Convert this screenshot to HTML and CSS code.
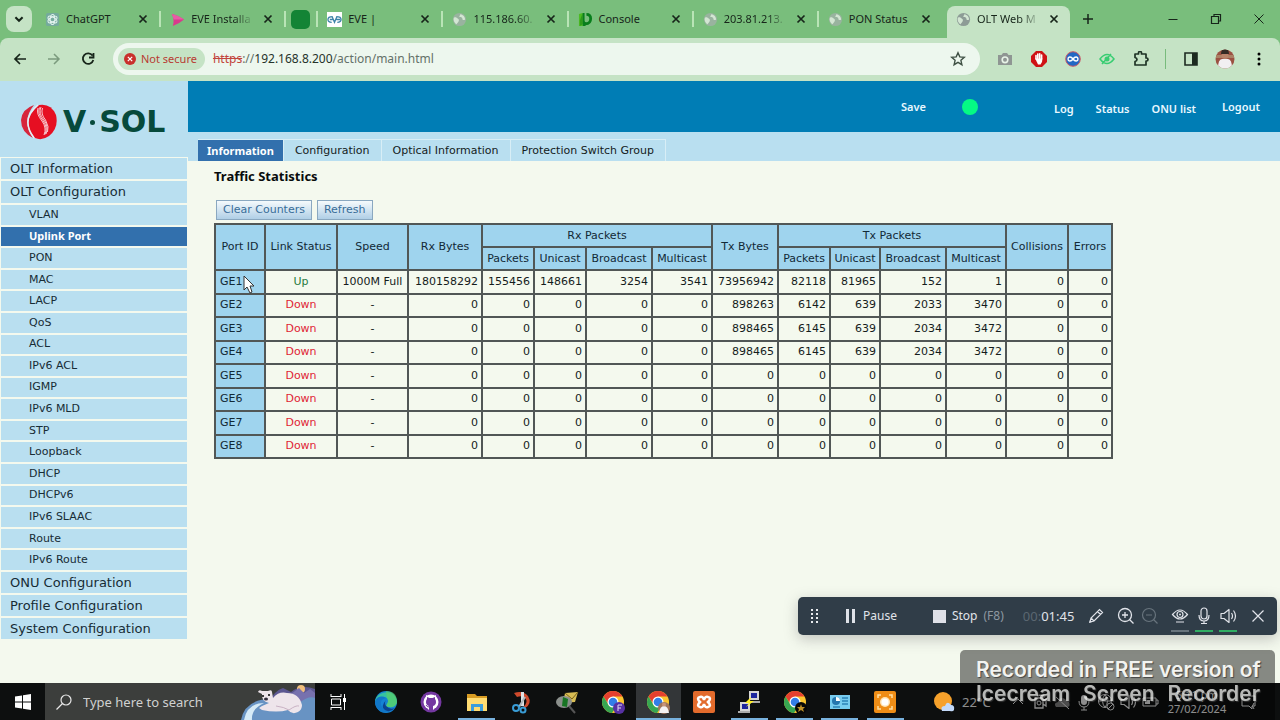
FILE: index.html
```html
<!DOCTYPE html>
<html lang="en">
<head>
<meta charset="utf-8">
<title>OLT Web Management</title>
<link rel="stylesheet" href="styles.css">
</head>
<body>
<svg class="defs" aria-hidden="true">
  <symbol id="x" viewBox="0 0 10 10"><path d="M1.500 1.500l7 7m0-7l-7 7" fill="none" stroke="currentColor" stroke-width="1.700"/></symbol>
  <symbol id="globe" viewBox="0 0 16 16"><circle cx="8" cy="8" r="7" fill="currentColor"/><path d="M2 6c2-1 3 0 4 1s2 1 1 3-2 2-2 3c-2-1-4-4-3-7zM9 2c0 2-2 2-1 3s3 0 3 2 2 2 3 1c0-3-2-5-5-6z" fill="#d3e6d3"/></symbol>
  <symbol id="chrome" viewBox="0 0 24 24"><circle cx="12" cy="12" r="11" fill="#fbc62f"/><path d="M2.500 6.500A11 11 0 0 1 21.500 6.500H12L7.500 14z" fill="#e5402f"/><path d="M2.500 6.500A11 11 0 0 0 11 23l5.500-8.500-4.500 2-4-1z" fill="#37a652"/><circle cx="12" cy="12" r="5.500" fill="#fff"/><circle cx="12" cy="12" r="4.300" fill="#337ee8"/></symbol>
  <symbol id="speaker" viewBox="0 0 18 18"><path d="M2 6.500h3l5-4v13l-5-4H2zM12.500 6q2 3 0 6M14.500 3.500q4 5.500 0 11" fill="none" stroke="currentColor" stroke-width="1.200" stroke-linejoin="round"/></symbol>
</svg>

<header class="browser">
  <div class="tabstrip">
    <button class="tab-search" aria-label="Search tabs"><svg viewBox="0 0 10 10"><path d="M2 3.500l3 3 3-3" fill="none" stroke="currentColor" stroke-width="1.700"/></svg></button>
    <div class="tabs">
      <div class="tab"><svg class="fav" viewBox="0 0 16 16"><rect x="1" y="1" width="14" height="14" rx="2" fill="#74aa9c"/><g fill="none" stroke="#e3f3ef" stroke-width="1.100"><ellipse cx="8" cy="8" rx="2.500" ry="5.300"/><ellipse cx="8" cy="8" rx="2.500" ry="5.300" transform="rotate(60 8 8)"/><ellipse cx="8" cy="8" rx="2.500" ry="5.300" transform="rotate(120 8 8)"/></g></svg><span class="name">ChatGPT</span><button aria-label="Close"><svg><use href="#x"/></svg></button></div>
      <div class="tab"><svg class="fav" viewBox="0 0 16 16"><path d="M2 2q6 1 13 6-6 5-12 7 2-7-1-13z" fill="#d83a8c"/><path d="M2 2q6 1 13 6H4z" fill="#e95ba5"/></svg><span class="name fade">EVE Installa</span><button aria-label="Close"><svg><use href="#x"/></svg></button></div>
      <div class="tab pinned"><span class="square"></span></div>
      <div class="tab"><svg class="fav" viewBox="0 0 16 16"><rect width="16" height="16" fill="#fff"/><path d="M6 5Q1 5 1 8t4 3M3 8h3M5.500 5L8 11l2.500-6M10 5q5 0 5 3t-4 3M10 8h4" fill="none" stroke="#3d83a9" stroke-width="1.400"/></svg><span class="name">EVE |</span><button aria-label="Close"><svg><use href="#x"/></svg></button></div>
      <div class="tab"><svg class="fav pale"><use href="#globe"/></svg><span class="name fade">115.186.60.</span><button aria-label="Close"><svg><use href="#x"/></svg></button></div>
      <div class="tab"><svg class="fav" viewBox="0 0 16 16"><path d="M1 2l4-1v14H1z" fill="#4cbb22"/><path d="M5 1v12l-3 2V9z" fill="#2f9a1c"/><path d="M5 1h2v8q0 2 2 2 3 0 3-4 0-3-3-3V1q6 0 6 6 0 7-7 7v1H5z" fill="#087e1c"/></svg><span class="name">Console</span><button aria-label="Close"><svg><use href="#x"/></svg></button></div>
      <div class="tab"><svg class="fav pale"><use href="#globe"/></svg><span class="name fade">203.81.213.</span><button aria-label="Close"><svg><use href="#x"/></svg></button></div>
      <div class="tab"><svg class="fav pale"><use href="#globe"/></svg><span class="name">PON Status</span><button aria-label="Close"><svg><use href="#x"/></svg></button></div>
      <div class="tab active"><svg class="fav"><use href="#globe"/></svg><span class="name fade">OLT Web M</span><button aria-label="Close"><svg><use href="#x"/></svg></button></div>
    </div>
    <button class="new-tab" aria-label="New tab"><svg viewBox="0 0 12 12"><path d="M6 1v10M1 6h10" stroke="currentColor" stroke-width="1.500"/></svg></button>
    <div class="window-buttons">
      <button aria-label="Minimise"><svg viewBox="0 0 12 12"><path d="M1.500 6.500h9" stroke="currentColor"/></svg></button>
      <button aria-label="Restore"><svg viewBox="0 0 12 12"><path d="M1.500 3.500h7v7h-7zM4 3V1.500h6.500V8H9" fill="none" stroke="currentColor" stroke-width="1.200"/></svg></button>
      <button aria-label="Close window"><svg viewBox="0 0 12 12"><path d="M1.500 1.500l9 9m0-9l-9 9" stroke="currentColor"/></svg></button>
    </div>
  </div>
  <div class="toolbar">
    <div class="nav-buttons">
      <button aria-label="Back"><svg viewBox="0 0 16 16"><path d="M14 8H3M8 3L3 8l5 5" fill="none" stroke="currentColor" stroke-width="1.700"/></svg></button>
      <button class="off" aria-label="Forward"><svg viewBox="0 0 16 16"><path d="M2 8h11M8 3l5 5-5 5" fill="none" stroke="currentColor" stroke-width="1.500"/></svg></button>
      <button aria-label="Reload"><svg viewBox="0 0 16 16"><path d="M12.500 4.500A5.300 5.300 0 1 0 13.300 9M13.500 2v4.500H9" fill="none" stroke="currentColor" stroke-width="1.800"/></svg></button>
    </div>
    <div class="address">
      <span class="insecure"><svg viewBox="0 0 12 12"><circle cx="6" cy="6" r="6" fill="#c9302c"/><path d="M3.800 3.800l4.400 4.400m0-4.400L3.800 8.200" stroke="#fff" stroke-width="1.200"/></svg>Not secure</span>
      <span class="url"><s>https</s>://<b>192.168.8.200</b>/action/main.html</span>
      <button class="star" aria-label="Bookmark"><svg viewBox="0 0 16 16"><path d="M8 1.800l1.800 4.100 4.500.4-3.400 3 1 4.400L8 11.400l-3.900 2.300 1-4.400-3.400-3 4.500-.4z" fill="none" stroke="currentColor" stroke-width="1.400"/></svg></button>
    </div>
    <div class="extensions">
      <svg viewBox="0 0 16 16"><path d="M1 4h3.500L6 2h4l1.500 2H15v10H1z" fill="#8f9693"/><circle cx="8" cy="8.800" r="3.600" fill="#e8f4e8"/><circle cx="8" cy="8.800" r="2" fill="#8f9693"/></svg>
      <svg viewBox="0 0 16 16"><path d="M5 0h6l5 5v6l-5 5H5l-5-5V5z" fill="#cf1215"/><path d="M5 8V4.500M6.800 7.500V3M8.700 7.500V2.700M10.600 8V4" stroke="#fff" stroke-width="1.600" stroke-linecap="round"/><path d="M4.200 7.500h7.200L11 11l-1.500 2.500H7z" fill="#fff"/></svg>
      <svg viewBox="0 0 16 16"><circle cx="8" cy="8" r="7.300" fill="#2368c4" stroke="#cf5964"/><path d="M8 8C6 5 3 5.500 3 8s3 3 5 0 5-2.500 5 0-3 3-5 0z" fill="none" stroke="#fff" stroke-width="1.400"/></svg>
      <svg viewBox="0 0 16 16"><path d="M1 8q7-9 14 0-7 9-14 0zM3 13L12 3" fill="none" stroke="#38cd72" stroke-width="1.500"/><circle cx="8" cy="8" r="2.500" fill="#38cd72"/></svg>
      <svg viewBox="0 0 16 16"><path d="M2 3h3.500V2a1.500 1.500 0 0 1 3 0v1H13v4h.500a1.500 1.500 0 0 1 0 3H13v4H2v-3.500q2-.500 2-2t-2-2z" fill="none" stroke="#1e3325" stroke-width="1.700" stroke-linejoin="round"/></svg>
    </div>
    <div class="profile">
      <svg viewBox="0 0 16 16"><path d="M2 2h12v12H2z" fill="none" stroke="#1c2a20" stroke-width="1.600"/><path d="M9 2h5v12H9z" fill="#1c2a20"/></svg>
      <svg class="avatar" viewBox="0 0 20 20"><clipPath id="av"><circle cx="10" cy="10" r="9.500"/></clipPath><g clip-path="url(#av)"><path fill="#9b5142" d="M0 0h20v20H0z"/><path fill="#ab8165" d="M0 6h20v3H0z"/><path d="M3 20q0-10 4-10h6q4 0 4 10z" fill="#f1eff2"/><circle cx="10" cy="6.500" r="3.500" fill="#b88369"/><path d="M6 5q0-5 4-5t4 5z" fill="#352b25"/></g></svg>
      <svg viewBox="0 0 16 16"><circle cx="8" cy="3" r="1.500"/><circle cx="8" cy="8" r="1.500"/><circle cx="8" cy="13" r="1.500"/></svg>
    </div>
  </div>
</header>

<main class="app">
  <aside class="sidebar">
    <div class="logo">
      <svg viewBox="0 0 36 36"><path d="M13 1Q1 5 0 16q0 12 12 18Q0 17 13 1z" fill="#d7263c"/><path d="M18 1Q30-1 35 11q3 13-7 21-7 5-14 2Q-1 17 18 1z" fill="#e60f22"/><path d="M17 1Q-1 15 13 34" fill="none" stroke="#e6eef5" stroke-width="1.500"/><path d="M17 4q-2 6 4 13 5 7 2 14M20 3q-3 6 3 13 5 7 2 14M18.500 3.500q-2.500 6 3.500 13 5 7 2 14M21.500 4q-2 6 3 12 4 7 2 12" fill="none" stroke="#f8c8cf" stroke-width="1"/></svg>
      <strong>V<i></i>SOL</strong>
    </div>
    <nav class="menu">
      <a href="#">OLT Information</a>
      <a href="#">OLT Configuration</a>
      <div class="submenu">
        <a href="#">VLAN</a><a href="#" class="current">Uplink Port</a><a href="#">PON</a><a href="#">MAC</a><a href="#">LACP</a><a href="#">QoS</a><a href="#">ACL</a><a href="#">IPv6 ACL</a><a href="#">IGMP</a><a href="#">IPv6 MLD</a><a href="#">STP</a><a href="#">Loopback</a><a href="#">DHCP</a><a href="#">DHCPv6</a><a href="#">IPv6 SLAAC</a><a href="#">Route</a><a href="#">IPv6 Route</a>
      </div>
      <a href="#">ONU Configuration</a>
      <a href="#">Profile Configuration</a>
      <a href="#">System Configuration</a>
    </nav>
  </aside>
  <section class="content">
    <div class="banner">
      <a href="#">Save</a><span class="led"></span>
      <nav><a href="#">Log</a><a href="#">Status</a><a href="#">ONU list</a></nav>
      <a href="#">Logout</a>
    </div>
    <nav class="page-tabs"><a href="#" class="current">Information</a><a href="#">Configuration</a><a href="#">Optical Information</a><a href="#">Protection Switch Group</a></nav>
    <div class="panel">
      <h1>Traffic Statistics</h1>
      <div class="actions"><button>Clear Counters</button><button>Refresh</button></div>
      <table>
        <colgroup><col class="w50"><col class="w72"><col class="w71"><col class="w74"><col class="w52"><col class="w52"><col class="w66"><col class="w60"><col class="w66"><col class="w52"><col class="w50"><col class="w66"><col class="w60"><col class="w62"><col class="w44"></colgroup>
        <thead>
          <tr><th rowspan="2">Port ID</th><th rowspan="2">Link Status</th><th rowspan="2">Speed</th><th rowspan="2">Rx Bytes</th><th colspan="4">Rx Packets</th><th rowspan="2">Tx Bytes</th><th colspan="4">Tx Packets</th><th rowspan="2">Collisions</th><th rowspan="2">Errors</th></tr>
          <tr><th>Packets</th><th>Unicast</th><th>Broadcast</th><th>Multicast</th><th>Packets</th><th>Unicast</th><th>Broadcast</th><th>Multicast</th></tr>
        </thead>
        <tbody>
          <tr><th>GE1</th><td class="up">Up</td><td>1000M Full</td><td>180158292</td><td>155456</td><td>148661</td><td>3254</td><td>3541</td><td>73956942</td><td>82118</td><td>81965</td><td>152</td><td>1</td><td>0</td><td>0</td></tr>
          <tr><th>GE2</th><td>Down</td><td>-</td><td>0</td><td>0</td><td>0</td><td>0</td><td>0</td><td>898263</td><td>6142</td><td>639</td><td>2033</td><td>3470</td><td>0</td><td>0</td></tr>
          <tr><th>GE3</th><td>Down</td><td>-</td><td>0</td><td>0</td><td>0</td><td>0</td><td>0</td><td>898465</td><td>6145</td><td>639</td><td>2034</td><td>3472</td><td>0</td><td>0</td></tr>
          <tr><th>GE4</th><td>Down</td><td>-</td><td>0</td><td>0</td><td>0</td><td>0</td><td>0</td><td>898465</td><td>6145</td><td>639</td><td>2034</td><td>3472</td><td>0</td><td>0</td></tr>
          <tr><th>GE5</th><td>Down</td><td>-</td><td>0</td><td>0</td><td>0</td><td>0</td><td>0</td><td>0</td><td>0</td><td>0</td><td>0</td><td>0</td><td>0</td><td>0</td></tr>
          <tr><th>GE6</th><td>Down</td><td>-</td><td>0</td><td>0</td><td>0</td><td>0</td><td>0</td><td>0</td><td>0</td><td>0</td><td>0</td><td>0</td><td>0</td><td>0</td></tr>
          <tr><th>GE7</th><td>Down</td><td>-</td><td>0</td><td>0</td><td>0</td><td>0</td><td>0</td><td>0</td><td>0</td><td>0</td><td>0</td><td>0</td><td>0</td><td>0</td></tr>
          <tr><th>GE8</th><td>Down</td><td>-</td><td>0</td><td>0</td><td>0</td><td>0</td><td>0</td><td>0</td><td>0</td><td>0</td><td>0</td><td>0</td><td>0</td><td>0</td></tr>
        </tbody>
      </table>
    </div>
  </section>
</main>

<footer class="taskbar">
  <button class="start" aria-label="Start"><svg viewBox="0 0 16 16"><path d="M0 2.500l7-1v6H0zM8 1.300L16 0v7.500H8zM0 8.500h7v6l-7-1zM8 8.500h8V16l-8-1.300z" fill="#fff"/></svg></button>
  <label class="search">
    <svg class="lens" viewBox="0 0 16 16"><circle cx="10" cy="6" r="5" fill="none" stroke="#e8e8e8" stroke-width="1.200"/><path d="M6.500 9.500L.500 15.500" stroke="#e8e8e8" stroke-width="1.300"/></svg>
    <input type="text" placeholder="Type here to search" aria-label="Search">
    <svg class="bear" viewBox="0 0 74 36"><path d="M26 20q8-14 16-16l8 4q10-8 24-3v31H26z" fill="#5c5791"/><circle cx="60" cy="5" r="4" fill="#f1bf7c"/><path d="M50 10l8-6 5 5 6-4 5 4v12H50z" fill="#7771ae"/><path d="M0 36Q4 15 30 15l28 4q10-8 16-5v22z" fill="#6893c3"/><path d="M3 36q3-17 20-17-13 6-12 17z" fill="#d5eaf7"/><path d="M17 8q1-3 4-1h6q4-2 4 1l1 6q6-7 14-5 12 0 15 12 0 5-4 7-6 3-10-2-11 3-26 0l-3-2 3-2 7-3q-8-2-7-9z" fill="#eee5eb"/><path d="M35 22q8 1 13 4 7-5 10-4" fill="none" stroke="#c9b2c4"/><circle cx="22" cy="12" r="1"/><circle cx="28" cy="11" r="1"/><ellipse cx="25" cy="15" rx="2" ry="1.500" fill="#322c3b"/></svg>
  </label>
  <button class="start" aria-label="Task view"><svg viewBox="0 0 16 16"><path d="M1 0v3M11 0v3M1 16v-3M11 16v-3M1 2.500h10M1 13.500h10M1.500 5h9v6h-9zM14.500 0v16" fill="none" stroke="#fff"/><path d="M13 4h3v4h-3z" fill="#fff"/></svg></button>
  <div class="apps">
    <button aria-label="Edge"><svg viewBox="0 0 24 24"><circle cx="12" cy="12" r="11" fill="#1583d4"/><path d="M1 12C2 0 22-2 23 12q-1 6-8 5-4 0-2-3 3-5-2-7Q5 6 1 12z" fill="#36c2a0"/><path d="M12 1q11 0 11 11-1 6-8 5-4 0-2-3 2-3 0-6z" fill="#5fd05f" opacity=".6"/><path d="M1 11q4-7 11-3-6 1-5 7 2 6 11 5Q9 26 3 18q-2-3-2-7z" fill="#1177c8"/><path d="M12 10q-2 3 0 6 4 4 9 2-5 5-10 2t1-10z" fill="#0b438f"/></svg></button>
    <button aria-label="GitHub Desktop"><svg viewBox="0 0 24 24"><circle cx="12" cy="12" r="10.500" fill="#7438a1"/><circle cx="12" cy="12" r="7.500" fill="#fff"/><path d="M9.500 20v-4q-4-1-3.500-5 0-2 1-3V5l3 1.500h4L17 5v3q1 1 1 3 .500 4-3.500 5v4z" fill="#fff"/><path d="M10 20v-4q-3-1-3-4 0-2 1-3V7l2.500 1h3L16 7v2q1 1 1 3 0 3-3 4v4z" fill="#7438a1"/><path d="M7 15q1 2 3 2" fill="none" stroke="#7438a1"/></svg></button>
    <button class="open" aria-label="File Explorer"><svg viewBox="0 0 24 24"><path d="M2 4h8l2 2h10v14H2z" fill="#d89c23"/><path d="M2 8h20v13H2z" fill="#ffdc72"/><path d="M6 21v-7h12v7h-3v-4H9v4z" fill="#3b9ddc"/></svg></button>
    <button aria-label="Snipping Tool"><svg viewBox="0 0 24 24"><path d="M4 3q9-3 14 3 5 8-4 13l-1-2q6-5 2-9-3-3-8-1z" fill="#cf4a2c"/><path d="M11 2h3v14h-3z" fill="#dde1e4"/><path d="M15 7l-6 10" stroke="#aeb6bb" stroke-width="2"/><g fill="none" stroke="#399cd5" stroke-width="2"><circle cx="6" cy="18" r="3"/><circle cx="13" cy="20" r="2.500"/></g></svg></button>
    <button aria-label="Mail monitor"><svg viewBox="0 0 24 24"><path d="M10 3l13-1-3 10-12 1z" fill="#d8bd54"/><path d="M10 3l7 6 6-7" fill="none" stroke="#765f1c"/><ellipse cx="9" cy="12" rx="8" ry="6" fill="#8b908c"/><path d="M8 7l5 2-1 8-5-1z" fill="#187524"/><path d="M14 16l6 7" stroke="#555" stroke-width="2"/></svg></button>
    <button aria-label="Chrome F"><svg viewBox="0 0 24 24"><use href="#chrome"/><circle cx="18" cy="18" r="6" fill="#5731a4"/><path d="M17 21v-6h4M17 18h3" fill="none" stroke="#e2d7f5"/></svg></button>
    <button class="open focus" aria-label="Chrome"><svg viewBox="0 0 24 24"><use href="#chrome"/><circle cx="18" cy="18" r="6" fill="#a0755d"/><path d="M13 23q1-7 5-7t5 7z" fill="#f4f2f3"/><circle cx="18" cy="14.500" r="2" fill="#c6947b"/></svg></button>
    <button aria-label="XAMPP"><svg viewBox="0 0 24 24"><rect x="1" y="1" width="22" height="22" rx="2" fill="#e36b2c"/><path d="M8 7q3-1 4 3 1-4 4-3 4 1 0 5 4 4 0 5-3 1-4-3-1 4-4 3-4-1 0-5-4-4 0-5z" fill="none" stroke="#fff" stroke-width="2.500"/></svg></button>
    <button class="open" aria-label="PuTTY"><svg viewBox="0 0 24 24"><path d="M12 1h10v9H12zM3 12h10v9H3z" fill="#d5d5d5"/><path d="M14 3h6v5h-6zM5 14h6v5H5z" fill="#1c259e"/><path d="M13 11h10v2H13zM1 21h12v2H1z" fill="#aaa"/><path d="M14 7l-6 6h4l-3 4 8-6h-4z" fill="#ffef28"/></svg></button>
    <button class="open" aria-label="Chrome A"><svg viewBox="0 0 24 24"><use href="#chrome"/><circle cx="18" cy="18" r="6" fill="#080808"/><path d="M18 14l1 3h3l-2 2 1 3-3-2-3 2 1-3-2-2h3z" fill="#c29228"/></svg></button>
    <button class="open" aria-label="Control panel"><svg viewBox="0 0 24 24"><path d="M2 5h20v14H2z" fill="#77ccef"/><circle cx="8" cy="11" r="4" fill="#2576ae"/><path d="M8 11V7a4 4 0 0 1 4 4z" fill="#fff"/><path d="M14 8h6M14 11h6M14 14h6M5 17h7" stroke="#2c83b8" stroke-width="1.500"/></svg></button>
    <button class="open" aria-label="Icecream Recorder"><svg viewBox="0 0 24 24"><rect x="1" y="1" width="22" height="22" rx="2" fill="#ef8d16"/><circle cx="12" cy="12" r="5" fill="#ffe5b7"/><circle cx="12" cy="12" r="3.500" fill="#fff"/><path d="M5 8V5h3M16 5h3v3M19 16v3h-3M8 19H5v-3" fill="none" stroke="#ffe0a4" stroke-width="1.500"/></svg></button>
  </div>
  <div class="tray">
    <span class="weather"><svg viewBox="0 0 24 24"><circle cx="11" cy="11" r="9" fill="#f6a12b"/><path d="M10 21q-2-5 3-5 2-6 6-1 4 0 3 5-1 2-4 1z" fill="#c3dafa"/></svg>22°C</span>
    <svg viewBox="0 0 18 18"><path d="M4 11l5-5 5 5" fill="none" stroke="currentColor"/></svg>
    <svg viewBox="0 0 18 18"><path d="M4 5h8v10H4zM12 8l3-2v7l-3-2M6 3q4-2 8 1" fill="none" stroke="currentColor" stroke-width="1.300"/><circle cx="8" cy="10" r="2" fill="none" stroke="currentColor"/></svg>
    <svg viewBox="0 0 18 18"><path d="M3 14q-3-4 2-5 2-6 7-3 1 2 4 3 2 5-2 5z" fill="#8a8a8a"/><path d="M3 4l13 12" stroke="currentColor"/></svg>
    <svg viewBox="0 0 18 18"><rect x="6" y="2" width="6" height="10" rx="3" fill="currentColor"/><path d="M4 8q0 6 5 6t5-6M9 14v3M6 17h6" fill="none" stroke="currentColor"/></svg>
    <svg viewBox="0 0 18 18"><circle cx="8" cy="8" r="6.500" fill="none" stroke="currentColor"/><path d="M1.500 8h13M8 1.500q-5 6.500 0 13M8 1.500q5 6.500 0 13" fill="none" stroke="currentColor"/><circle cx="13.500" cy="13.500" r="3.500" fill="#111" stroke="currentColor"/><path d="M11 16l5-5" stroke="currentColor"/></svg>
    <svg><use href="#speaker"/></svg>
    <svg viewBox="0 0 18 18"><path d="M2 5h13v8H2zM15 7h2v4h-2" fill="none" stroke="currentColor"/><path d="M4 7h5v4H4z" fill="currentColor"/></svg>
    <span class="clock">5:11 pm<br>27/02/2024</span>
    <svg viewBox="0 0 18 18"><path d="M2 3h13v10h-3v3l-3-3H2z" fill="none" stroke="currentColor"/><path d="M14 10q-3 3 0 6" fill="none" stroke="currentColor"/></svg>
  </div>
</footer>

<div class="recorder">
  <svg class="grip" viewBox="0 0 8 14"><path d="M0 1h2m3 0h2M0 5h2m3 0h2M0 9h2m3 0h2M0 13h2m3 0h2" stroke="#e7eaed" stroke-width="2"/></svg>
  <button class="pause"><svg viewBox="0 0 12 14"><path d="M1 0h3v14H1zM7 0h3v14H7z" fill="#dfe2e8"/></svg>Pause</button>
  <button class="stop"><span></span>Stop <em>(F8)</em></button>
  <time><em>00:</em>01:45</time>
  <div class="tools">
    <button aria-label="Draw"><svg viewBox="0 0 18 18"><path d="M3 15l1-4 8.500-8.500 3 3L7 14zM10.500 4.500l3 3M4 11l3 3" fill="none" stroke="currentColor" stroke-width="1.200"/><path d="M2 16l1-3 2 2z" fill="currentColor"/></svg></button>
    <button aria-label="Zoom in"><svg viewBox="0 0 18 18"><path d="M12.500 12.500l4 4M5 8h6M8 5v6" stroke="currentColor" stroke-width="1.300"/><circle cx="8" cy="8" r="6.500" fill="none" stroke="currentColor" stroke-width="1.300"/></svg></button>
    <button class="off" aria-label="Zoom out"><svg viewBox="0 0 18 18"><path d="M12.500 12.500l4 4M5 8h6" stroke="currentColor" stroke-width="1.200"/><circle cx="8" cy="8" r="6.500" fill="none" stroke="currentColor" stroke-width="1.200"/></svg></button>
    <button class="idle" aria-label="Webcam"><svg viewBox="0 0 18 18"><path d="M1.500 7.500q7.500-9 15 0-7.500 9-15 0zM5 15h8" fill="none" stroke="currentColor" stroke-width="1.200"/><circle cx="9" cy="7.500" r="3" fill="none" stroke="currentColor" stroke-width="1.200"/><circle cx="9" cy="7.500" r="1" fill="currentColor"/></svg></button>
    <button class="on" aria-label="Microphone"><svg viewBox="0 0 18 18"><rect x="6" y="1" width="6" height="11" rx="3" fill="none" stroke="currentColor" stroke-width="1.200"/><path d="M4 8q0 6 5 6t5-6M9 14v2.500M6 16.500h6" fill="none" stroke="currentColor" stroke-width="1.200"/></svg></button>
    <button class="on" aria-label="System audio"><svg><use href="#speaker"/></svg></button>
    <button aria-label="Close recorder"><svg viewBox="0 0 18 18"><path d="M3.500 3.500l11 11m0-11l-11 11" stroke="currentColor" stroke-width="1.200"/></svg></button>
  </div>
</div>
<div class="watermark"><p>Recorded in FREE version of</p><p><span>Icecream</span> <span>Screen</span> <span>Recorder</span></p></div>
<svg class="pointer" viewBox="0 0 12 19"><path d="M1 1v14l3-3 3 6 2-1-2-6h4z" fill="#fff" stroke="#333"/></svg>
</body>
</html>
```

FILE: styles.css
```css
* { box-sizing: border-box; }
body {
  margin: 0;
  min-height: 100vh;
  display: flex;
  flex-direction: column;
  position: relative;
  overflow-x: hidden;
  background: #f4f9ee;
  color: #151c1c;
  font: 11px/16px "DejaVu Sans", sans-serif;
}
button { border: 0; padding: 0; background: none; color: inherit; font: inherit; display: flex; align-items: center; justify-content: center; }
svg { display: block; flex: none; }
a { color: inherit; text-decoration: none; }
.defs { position: absolute; width: 0; height: 0; }

/* browser window */
.browser { font: 12px/16px "Noto Sans", sans-serif; color: #17251a; background: #79be7c; }
.tabstrip { height: 38px; display: flex; align-items: center; padding: 0 0 0 6px; }
.tab-search { width: 26px; height: 26px; border-radius: 8px; background: #c5e3c5; margin-right: 4px; }
.tab-search svg { width: 12px; height: 12px; }
.tabs { display: flex; flex: 0 1 1034px; min-width: 0; height: 38px; align-items: center; }
.tab { flex: 1 1 0; min-width: 0; display: flex; align-items: center; gap: 6px; padding: 0 11px 0 9px; height: 16px; border-right: 2px solid #b9e4b6; font-size: 11px; }
.tab.pinned { flex: 0 0 32px; padding: 0 5px; }
.square { width: 19px; height: 19px; border-radius: 5px; background: #138435; flex: none; }
.tab.active { height: 32px; align-self: flex-end; border: 0; padding: 0 11px 6px 9px; border-radius: 8px 8px 0 0; background: #c5e3c5; margin-left: 3px; }
.tab:nth-child(8) { border-color: transparent; }
.fav { width: 15px; height: 15px; color: #8d9c96; }
.fav.pale { color: #99b39f; }
.name { flex: 1; white-space: nowrap; }
.name.fade { -webkit-mask-image: linear-gradient(90deg, #000 65%, #0003 90%); mask-image: linear-gradient(90deg, #000 65%, #0003 90%); }
.tab button svg { width: 10px; height: 10px; }
.new-tab { margin-left: 12px; }
.new-tab svg, .window-buttons svg { width: 12px; height: 12px; }
.window-buttons { display: flex; margin-left: auto; }
.window-buttons button { width: 43px; height: 30px; }
.toolbar { display: flex; align-items: center; height: 43px; padding: 0 13px 2px 12px; background: #c5e3c5; border-radius: 8px 8px 0 0; }
.nav-buttons { display: flex; gap: 18px; margin-right: 17px; }
.nav-buttons svg, .star svg { width: 16px; height: 16px; }
.nav-buttons .off { color: #7b9b7e; }
.address { flex: 1; height: 32px; display: flex; align-items: center; gap: 8px; padding: 0 14px 0 5px; border-radius: 16px; background: #edf7ee; }
.insecure { display: flex; align-items: center; gap: 5px; height: 22px; padding: 0 8px 0 6px; border-radius: 11px; background: #c5e3c5; color: #b83a32; font-size: 11px; }
.insecure svg { width: 12px; height: 12px; }
.url { color: #647169; font-size: 12px; }
.url s { color: #c2453d; }
.url b { font-weight: 400; color: #26332b; }
.star { margin-left: auto; color: #3f5044; }
.extensions { display: flex; gap: 18px; padding: 0 16px 0 17px; }
.extensions svg, .profile svg { width: 16px; height: 16px; }
.profile { display: flex; align-items: center; gap: 16px; padding-left: 17px; border-left: 1px solid #78bb7c; }
.profile .avatar { width: 20px; height: 20px; }

/* management page */
.app { flex: 1; display: flex; }
.sidebar { width: 188px; flex: none; }
.logo { display: flex; align-items: center; gap: 6px; height: 76px; padding: 6px 0 0 21px; background: #b9dff0; }
.logo > svg { width: 36px; height: 36px; }
.logo strong { display: flex; align-items: center; font: 900 30px/36px "DejaVu Sans", sans-serif; color: #064a3b; }
.logo i { width: 5px; height: 5px; border-radius: 50%; background: #064a3b; margin: 0 4px; }
.menu { font-size: 13px; color: #172c35; }
.menu a { display: flex; align-items: center; min-height: 23px; padding: 0 9px; background: #b9dff0; border: 1px solid #f4f9ee; }
.menu > a:nth-child(2) { min-height: 24px; }
.submenu { display: grid; grid-auto-rows: 1fr; min-height: 367px; font-size: 11px; }
.menu .submenu a { min-height: 21px; padding-left: 28px; }
.menu .current, .page-tabs .current { background: #3270ad; color: #fff; font-family: "Noto Sans", sans-serif; font-weight: 700; }
.content { flex: 1; min-width: 0; }
.banner { height: 51px; display: flex; align-items: center; justify-content: flex-end; padding-right: 20px; background: #007db5; color: #e9f8ff; font: 600 11px/16px "Noto Sans", sans-serif; }
.led { width: 16px; height: 16px; border-radius: 50%; background: #05fa84; margin: 0 76px 0 36px; }
.banner nav { display: flex; gap: 22px; margin-right: 26px; padding-top: 4px; }
.page-tabs { display: flex; align-items: flex-end; height: 29px; padding-left: 10px; background: #b9dff0; }
.page-tabs a { padding: 2px 11px; line-height: 17px; border-right: 1px solid #d8eef6; border-top: 1px solid #d8eef6; }
.page-tabs .current { padding: 2px 9px; }
.panel { padding: 7px 26px 0; }
h1 { margin: 0 0 16px; font: 700 13px/16px "Noto Sans", sans-serif; color: #080c0c; }
.actions { display: flex; gap: 5px; padding: 0 2px; margin-bottom: 3px; }
.actions button { height: 20px; padding: 0 6px; border: 1px solid #8aa8c0; background: linear-gradient(#f5fafc, #b0cfe6); color: #386d99; }
table { table-layout: fixed; border-collapse: collapse; width: 897px; height: 236px; }
tr { height: 23px; }
th, td { border: 2px solid #515756; padding: 0 3px; text-align: right; font-weight: 400; white-space: nowrap; }
th { background: #9fd4ee; color: #122936; text-align: center; padding: 0; }
tbody th { text-align: left; padding-left: 4px; }
td:nth-child(2), td:nth-child(3) { text-align: center; padding: 0; }
td:nth-child(2) { color: #e01e35; }
td.up { color: #287b3e; }
.w44 { width: 44px; } .w50 { width: 50px; } .w52 { width: 52px; } .w60 { width: 60px; } .w62 { width: 62px; } .w66 { width: 66px; } .w71 { width: 71px; } .w72 { width: 72px; } .w74 { width: 74px; }

/* desktop taskbar */
.taskbar { display: flex; height: 37px; background: #0d0f0f; color: #fff; font: 12px/14px "Noto Sans", sans-serif; }
.start { width: 45px; }
.start svg { width: 16px; height: 16px; }
.search { width: 270px; display: flex; align-items: center; gap: 11px; padding-left: 11px; background: #3c3e3c; overflow: hidden; }
.lens { width: 16px; height: 16px; }
.search input { flex: 1; min-width: 0; border: 0; padding: 0; background: none; color: #ddd; font: 13px/20px "Noto Sans", sans-serif; }
.search input::placeholder { color: #d0d1d0; opacity: 1; }
.bear { width: 74px; height: 36px; }
.apps { flex: 0 1 545px; display: flex; min-width: 0; margin-left: 3px; }
.apps button { flex: 1; border: solid transparent; border-width: 2px 0; }
.apps svg { width: 24px; height: 24px; }
.apps .open { background: linear-gradient(#78b2de, #78b2de) center bottom / 37px 2px no-repeat border-box; }
.apps .focus { background: linear-gradient(#78b2de, #78b2de) center bottom / 100% 2px no-repeat border-box, #333638; }
.tray { flex: 1; display: flex; align-items: center; gap: 4px; padding: 0 20px 0 24px; }
.tray svg { width: 18px; height: 18px; }
.tray .weather { display: flex; align-items: center; gap: 6px; font-size: 13px; margin-right: 14px; }
.tray .weather svg { width: 24px; height: 24px; }
.clock { text-align: center; font-size: 11px; margin: 0 10px 0 5px; }

/* screen recorder overlays */
.recorder { position: absolute; right: 3px; bottom: 85px; height: 38px; width: 479px; display: flex; align-items: center; padding: 0 10px 0 13px; border-radius: 5px; background: #303d48; color: #e1e4ea; font: 13px/16px "Noto Sans", sans-serif; box-shadow: 0 4px 14px #8887; }
.recorder em { font-style: normal; color: #8e98a1; }
.grip { width: 8px; height: 14px; margin-right: 26px; }
.pause, .stop { font-size: 12px; }
.pause svg { width: 12px; height: 14px; margin-right: 6px; }
.pause { margin-right: 36px; }
.stop span { width: 13px; height: 13px; background: #dfe1e8; margin-right: 6px; }
.stop em { margin-left: 6px; }
time { margin-left: 19px; }
.recorder time em { color: #5b6771; }
.tools { display: flex; margin-left: auto; gap: 6px; }
.tools button { width: 18px; height: 32px; border: solid transparent; border-width: 2px 0; }
.tools button:nth-child(2) { margin-left: 6px; }
.tools button:nth-child(4), .tools button:last-child { margin-left: 6px; }
.tools svg { width: 18px; height: 18px; }
.tools .off { color: #68747d; }
.tools .idle { border-bottom-color: #68747d; }
.tools .on { border-bottom-color: #30ad63; }
.watermark { position: absolute; right: 5px; bottom: 0; width: 315px; height: 70px; padding: 8px 15px 0 16px; border-radius: 5px 5px 0 0; background: #00000073; color: #f2f3f0; font: 600 21px/24px Inter, sans-serif; text-shadow: 1px 1px 1px #444; }
.watermark p { margin: 0; display: flex; justify-content: space-between; white-space: nowrap; }
.watermark p:last-child { opacity: .75; }
.pointer { position: absolute; left: 243px; top: 275px; width: 12px; height: 19px; }
```
